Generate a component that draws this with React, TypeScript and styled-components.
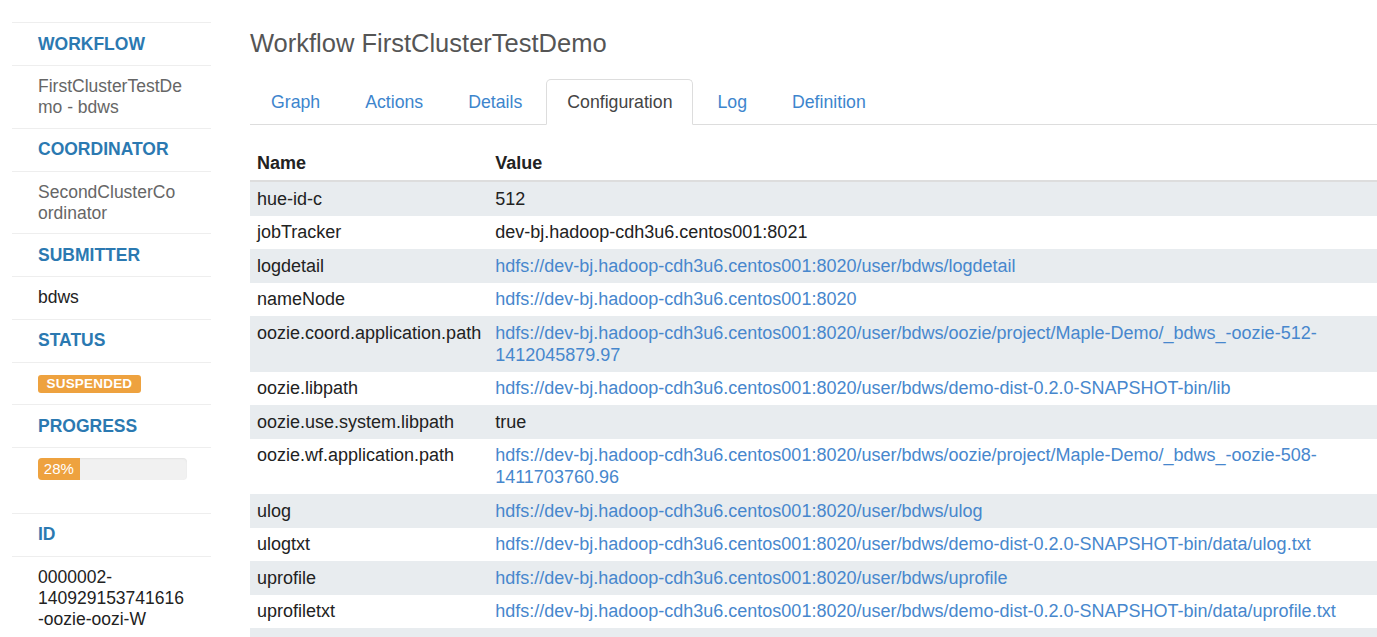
import React from "react";
import styled, { createGlobalStyle } from "styled-components";

const Global = createGlobalStyle`
  html, body {
    margin: 0;
    padding: 0;
    overflow: hidden;
    background: #fff;
  }
  body {
    font-family: "Liberation Sans", Arial, Helvetica, sans-serif;
    color: #333;
  }
`;

const Page = styled.div`
  display: flex;
  align-items: flex-start;
  gap: 39px;
  padding-left: 12px;
  width: 1377px;
  box-sizing: border-box;
`;

const Sidebar = styled.ul`
  list-style: none;
  margin: 22px 0 0 0;
  padding: 0;
  width: 199px;
  flex: none;
`;

const NavHeader = styled.li`
  border-top: 1px solid #eeeeee;
  padding: 10.5px 0 10.5px 26px;
  font-size: 17.5px;
  line-height: 21px;
  font-weight: 700;
  text-transform: uppercase;
  color: #2b79b1;
`;

const NavValue = styled.li<{ $muted?: boolean; $spaceBelow?: number }>`
  border-top: 1px solid #eeeeee;
  padding: 10px 0 ${(p) => 10.5 + (p.$spaceBelow ?? 0)}px 26px;
  font-size: 17.5px;
  line-height: 21px;
  color: ${(p) => (p.$muted ? "#666666" : "#222222")};
`;

const Badge = styled.span`
  display: inline-block;
  background: #eea23f;
  color: #fff;
  font-size: 13.5px;
  font-weight: 700;
  line-height: 18px;
  padding: 0 8.5px;
  border-radius: 3px;
  vertical-align: middle;
  letter-spacing: 0.2px;
`;

const Progress = styled.div`
  width: 149px;
  height: 22px;
  background: #f1f1f1;
  border-radius: 4px;
  overflow: hidden;
  display: flex;
  box-shadow: inset 0 1px 2px rgba(0, 0, 0, 0.06);
`;

const ProgressFill = styled.div`
  background: #eea23f;
  color: #fff;
  font-size: 15px;
  line-height: 22px;
  text-align: center;
`;

const Main = styled.div`
  flex: 1;
  min-width: 0;
  padding-top: 25px;
`;

const Title = styled.h1`
  margin: 0 0 18px 0;
  font-size: 25.5px;
  line-height: 36px;
  font-weight: 400;
  color: #555;
`;

const Tabs = styled.ul`
  list-style: none;
  margin: 0;
  padding: 0;
  display: flex;
  border-bottom: 1px solid #dddddd;
`;

const Tab = styled.li<{ $active?: boolean }>`
  margin-right: 3px;
  margin-bottom: -1px;
  padding: 11px 20px;
  font-size: 17.7px;
  line-height: 22px;
  border: 1px solid ${(p) => (p.$active ? "#dddddd" : "transparent")};
  border-bottom-color: ${(p) => (p.$active ? "#ffffff" : "transparent")};
  border-radius: 5px 5px 0 0;
  background: ${(p) => (p.$active ? "#ffffff" : "transparent")};
  color: ${(p) => (p.$active ? "#444444" : "#3d85cd")};
`;

const Table = styled.table`
  margin-top: 21px;
  width: 100%;
  border-collapse: collapse;
  font-size: 18px;
  line-height: 22px;
`;

const HeadCell = styled.th<{ $w?: number }>`
  text-align: left;
  font-weight: 700;
  color: #222;
  padding: 6px 7px;
  border-bottom: 2px solid #dddddd;
  width: ${(p) => (p.$w ? `${p.$w}px` : "auto")};
  box-sizing: border-box;
`;

const Row = styled.tr<{ $striped?: boolean }>`
  background: ${(p) => (p.$striped ? "#e8ecef" : "#ffffff")};
`;

const Cell = styled.td`
  padding: 5.75px 7px;
  vertical-align: top;
  color: #222;
`;

const Link = styled.a`
  color: #4787cd;
  text-decoration: none;
`;

type Conf = { name: string; value: string; link?: boolean };

const rows: Conf[] = [
  { name: "hue-id-c", value: "512" },
  { name: "jobTracker", value: "dev-bj.hadoop-cdh3u6.centos001:8021" },
  { name: "logdetail", value: "hdfs://dev-bj.hadoop-cdh3u6.centos001:8020/user/bdws/logdetail", link: true },
  { name: "nameNode", value: "hdfs://dev-bj.hadoop-cdh3u6.centos001:8020", link: true },
  {
    name: "oozie.coord.application.path",
    value: "hdfs://dev-bj.hadoop-cdh3u6.centos001:8020/user/bdws/oozie/project/Maple-Demo/_bdws_-oozie-512-1412045879.97",
    link: true,
  },
  { name: "oozie.libpath", value: "hdfs://dev-bj.hadoop-cdh3u6.centos001:8020/user/bdws/demo-dist-0.2.0-SNAPSHOT-bin/lib", link: true },
  { name: "oozie.use.system.libpath", value: "true" },
  {
    name: "oozie.wf.application.path",
    value: "hdfs://dev-bj.hadoop-cdh3u6.centos001:8020/user/bdws/oozie/project/Maple-Demo/_bdws_-oozie-508-1411703760.96",
    link: true,
  },
  { name: "ulog", value: "hdfs://dev-bj.hadoop-cdh3u6.centos001:8020/user/bdws/ulog", link: true },
  { name: "ulogtxt", value: "hdfs://dev-bj.hadoop-cdh3u6.centos001:8020/user/bdws/demo-dist-0.2.0-SNAPSHOT-bin/data/ulog.txt", link: true },
  { name: "uprofile", value: "hdfs://dev-bj.hadoop-cdh3u6.centos001:8020/user/bdws/uprofile", link: true },
  { name: "uprofiletxt", value: "hdfs://dev-bj.hadoop-cdh3u6.centos001:8020/user/bdws/demo-dist-0.2.0-SNAPSHOT-bin/data/uprofile.txt", link: true },
];

const tabs = ["Graph", "Actions", "Details", "Configuration", "Log", "Definition"];

export default function App() {
  const progress = 28;
  return (
    <>
      <Global />
      <Page>
        <Sidebar>
          <NavHeader>Workflow</NavHeader>
          <NavValue $muted $spaceBelow={-1}>
            FirstClusterTestDe
            <br />
            mo - bdws
          </NavValue>
          <NavHeader>Coordinator</NavHeader>
          <NavValue $muted $spaceBelow={-1}>
            SecondClusterCo
            <br />
            ordinator
          </NavValue>
          <NavHeader>Submitter</NavHeader>
          <NavValue>bdws</NavValue>
          <NavHeader>Status</NavHeader>
          <NavValue>
            <Badge>SUSPENDED</Badge>
          </NavValue>
          <NavHeader>Progress</NavHeader>
          <NavValue $spaceBelow={22}>
            <Progress>
              <ProgressFill style={{ width: `${progress}%` }}>{progress}%</ProgressFill>
            </Progress>
          </NavValue>
          <NavHeader>Id</NavHeader>
          <NavValue>
            0000002-
            <br />
            140929153741616
            <br />
            -oozie-oozi-W
          </NavValue>
        </Sidebar>
        <Main>
          <Title>Workflow FirstClusterTestDemo</Title>
          <Tabs>
            {tabs.map((t) => (
              <Tab key={t} $active={t === "Configuration"}>
                {t}
              </Tab>
            ))}
          </Tabs>
          <Table>
            <thead>
              <tr>
                <HeadCell $w={238}>Name</HeadCell>
                <HeadCell>Value</HeadCell>
              </tr>
            </thead>
            <tbody>
              {rows.map((r, i) => (
                <Row key={r.name} $striped={i % 2 === 0}>
                  <Cell>{r.name}</Cell>
                  <Cell>{r.link ? <Link href="#">{r.value}</Link> : r.value}</Cell>
                </Row>
              ))}
              <Row $striped>
                <Cell>&nbsp;</Cell>
                <Cell>&nbsp;</Cell>
              </Row>
            </tbody>
          </Table>
        </Main>
      </Page>
    </>
  );
}
